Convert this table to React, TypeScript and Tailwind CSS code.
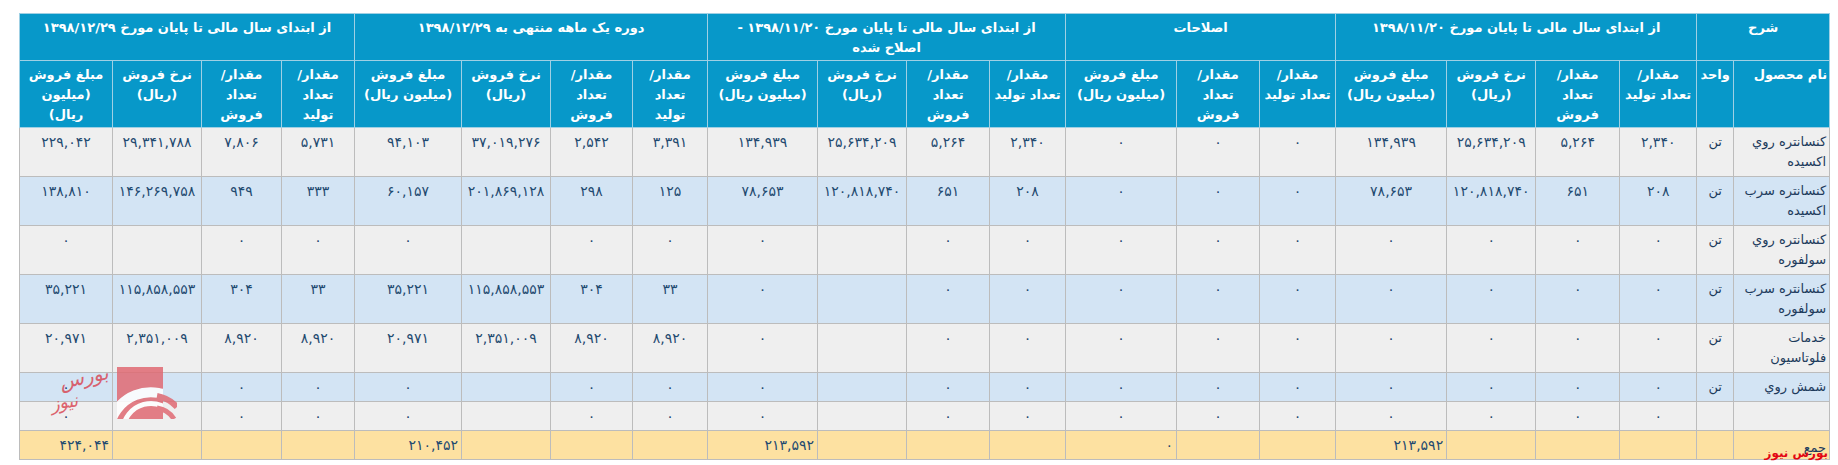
import * as React from "react"

const Z = "۰"

// column widths, right to left
const widths = [96, 37, 77, 84, 89, 111, 76, 83, 111, 76, 83, 89, 110, 75, 82, 89, 107, 73, 80, 89, 93]

type Row = { name: string[]; unit: string; vals: string[] }

const rows: Row[] = [
  {
    name: ["کنسانتره روي", "اکسیده"],
    unit: "تن",
    vals: ["۲,۳۴۰", "۵,۲۶۴", "۲۵,۶۳۴,۲۰۹", "۱۳۴,۹۳۹", Z, Z, Z, "۲,۳۴۰", "۵,۲۶۴", "۲۵,۶۳۴,۲۰۹", "۱۳۴,۹۳۹", "۳,۳۹۱", "۲,۵۴۲", "۳۷,۰۱۹,۲۷۶", "۹۴,۱۰۳", "۵,۷۳۱", "۷,۸۰۶", "۲۹,۳۴۱,۷۸۸", "۲۲۹,۰۴۲"],
  },
  {
    name: ["کنسانتره سرب", "اکسیده"],
    unit: "تن",
    vals: ["۲۰۸", "۶۵۱", "۱۲۰,۸۱۸,۷۴۰", "۷۸,۶۵۳", Z, Z, Z, "۲۰۸", "۶۵۱", "۱۲۰,۸۱۸,۷۴۰", "۷۸,۶۵۳", "۱۲۵", "۲۹۸", "۲۰۱,۸۶۹,۱۲۸", "۶۰,۱۵۷", "۳۳۳", "۹۴۹", "۱۴۶,۲۶۹,۷۵۸", "۱۳۸,۸۱۰"],
  },
  {
    name: ["کنسانتره روي", "سولفوره"],
    unit: "تن",
    vals: [Z, Z, Z, Z, Z, Z, Z, Z, Z, "", Z, Z, Z, "", Z, Z, Z, "", Z],
  },
  {
    name: ["کنسانتره سرب", "سولفوره"],
    unit: "تن",
    vals: [Z, Z, Z, Z, Z, Z, Z, Z, Z, "", Z, "۳۳", "۳۰۴", "۱۱۵,۸۵۸,۵۵۳", "۳۵,۲۲۱", "۳۳", "۳۰۴", "۱۱۵,۸۵۸,۵۵۳", "۳۵,۲۲۱"],
  },
  {
    name: ["خدمات", "فلوتاسیون"],
    unit: "تن",
    vals: [Z, Z, Z, Z, Z, Z, Z, Z, Z, "", Z, "۸,۹۲۰", "۸,۹۲۰", "۲,۳۵۱,۰۰۹", "۲۰,۹۷۱", "۸,۹۲۰", "۸,۹۲۰", "۲,۳۵۱,۰۰۹", "۲۰,۹۷۱"],
  },
  {
    name: ["شمش روي"],
    unit: "تن",
    vals: [Z, Z, Z, Z, Z, Z, Z, Z, Z, "", Z, Z, Z, "", Z, Z, Z, "", Z],
  },
  {
    name: [],
    unit: "",
    vals: [Z, Z, Z, Z, Z, Z, Z, Z, Z, "", Z, Z, Z, "", Z, Z, Z, "", Z],
  },
]

const totals = ["", "", "", "۲۱۳,۵۹۲", "", "", Z, "", "", "", "۲۱۳,۵۹۲", "", "", "", "۲۱۰,۴۵۲", "", "", "", "۴۲۴,۰۴۴"]

// sub headers, each entry is a list of lines
const prod2 = ["مقدار/", "تعداد تولید"]
const prod3 = ["مقدار/", "تعداد", "تولید"]
const sales = ["مقدار/", "تعداد", "فروش"]
const rate = ["نرخ فروش", "(ریال)"]
const amount2 = ["مبلغ فروش", "(میلیون ریال)"]
const amount3 = ["مبلغ فروش", "(میلیون", "ریال)"]

const subHeads: string[][] = [
  ["نام محصول"],
  ["واحد"],
  prod2, sales, rate, amount2,
  prod2, sales, amount2,
  prod2, sales, rate, amount2,
  prod3, sales, rate, amount2,
  prod3, sales, rate, amount3,
]

const th = "border border-[#9fd0e4] bg-[#0798c9] px-[2px] pt-[4px] pb-[2px] align-top text-center text-[13px] font-bold leading-5 text-white"
const td = "border border-[#bcbcbc] px-[3px] py-[4px] align-top text-[13px] leading-5"

function Lines({ lines }: { lines: string[] }) {
  return (
    <>
      {lines.map((l, i) => (
        <div key={i} className="whitespace-nowrap">
          {l}
        </div>
      ))}
    </>
  )
}

function Watermark() {
  return (
    <>
      <div
        dir="rtl"
        className="pointer-events-none absolute left-[46px] top-[366px] h-[50px] w-[68px] -rotate-12 italic leading-none text-[#d8414d] opacity-80"
        style={{ fontFamily: '"DejaVu Serif", "DejaVu Sans", serif' }}
      >
        <div className="absolute right-[2px] top-[2px] text-[20px]">بورس</div>
        <div className="absolute left-[2px] top-[24px] text-[18px]">نیوز</div>
      </div>
      <svg
        className="pointer-events-none absolute left-[117px] top-[367px] opacity-85"
        width="60"
        height="52"
        viewBox="0 0 60 52"
      >
        <defs>
          <clipPath id="sq">
            <rect x="0" y="0" width="46" height="52" />
          </clipPath>
        </defs>
        <rect x="0" y="0" width="46" height="52" fill="#e06a73" />
        <g clipPath="url(#sq)" fill="none" stroke="#fff">
          <path d="M-8 64 A42 42 0 0 1 62 36" strokeWidth="10" />
          <path d="M6 64 A28 28 0 0 1 58 50" strokeWidth="5" />
        </g>
        <g fill="none" stroke="#e06a73">
          <path d="M40 29 A36 36 0 0 1 60 40" strokeWidth="6" />
          <path d="M40 41 A24 24 0 0 1 57 52" strokeWidth="5" />
        </g>
      </svg>
    </>
  )
}

export default function App() {
  return (
    <div
      className="relative h-[465px] w-[1838px] overflow-hidden bg-white pl-[19px] pt-[13px]"
      style={{ fontFamily: '"DejaVu Sans", Tahoma, sans-serif' }}
    >
      <table dir="rtl" className="w-[1810px] table-fixed border-collapse">
        <colgroup>
          {widths.map((w, i) => (
            <col key={i} style={{ width: w }} />
          ))}
        </colgroup>
        <thead>
          <tr>
            <th colSpan={2} className={th}>شرح</th>
            <th colSpan={4} className={th}>از ابتدای سال مالی تا پایان مورخ ۱۳۹۸/۱۱/۲۰</th>
            <th colSpan={3} className={th}>اصلاحات</th>
            <th colSpan={4} className={th}>
              <Lines lines={["از ابتدای سال مالی تا پایان مورخ ۱۳۹۸/۱۱/۲۰ -", "اصلاح شده"]} />
            </th>
            <th colSpan={4} className={th}>دوره یک ماهه منتهی به ۱۳۹۸/۱۲/۲۹</th>
            <th colSpan={4} className={th}>از ابتدای سال مالی تا پایان مورخ ۱۳۹۸/۱۲/۲۹</th>
          </tr>
          <tr>
            {subHeads.map((lines, i) => (
              <th key={i} className={th + (i === 0 ? " text-right" : "")}>
                <Lines lines={lines} />
              </th>
            ))}
          </tr>
        </thead>
        <tbody className="text-[#1f4a70]">
          {rows.map((r, ri) => (
            <tr key={ri} className={ri % 2 === 0 ? "bg-[#efefef]" : "bg-[#d3e4f4]"}>
              <td className={td + " text-right text-[#1d3b5c]"}>
                {r.name.length ? <Lines lines={r.name} /> : "\u00a0"}
              </td>
              <td className={td + " text-center text-[#1d3b5c]"}>{r.unit}</td>
              {r.vals.map((v, i) => (
                <td key={i} className={td + " text-center text-[14px]"}>
                  {v}
                </td>
              ))}
            </tr>
          ))}
          <tr className="bg-[#fde1a1]">
            <td className={td + " pt-[7px] pb-[1px] text-right text-[#1d3b5c]"}>جمع</td>
            <td className={td} />
            {totals.map((v, i) => (
              <td key={i} className={td + " text-right text-[14px]"}>
                {v}
              </td>
            ))}
          </tr>
        </tbody>
      </table>
      <Watermark />
      <div dir="rtl" className="absolute right-[10px] top-[446px] whitespace-nowrap text-[12px] font-bold leading-[14px] text-[#e30613]">
        بورس نیوز
      </div>
    </div>
  )
}
